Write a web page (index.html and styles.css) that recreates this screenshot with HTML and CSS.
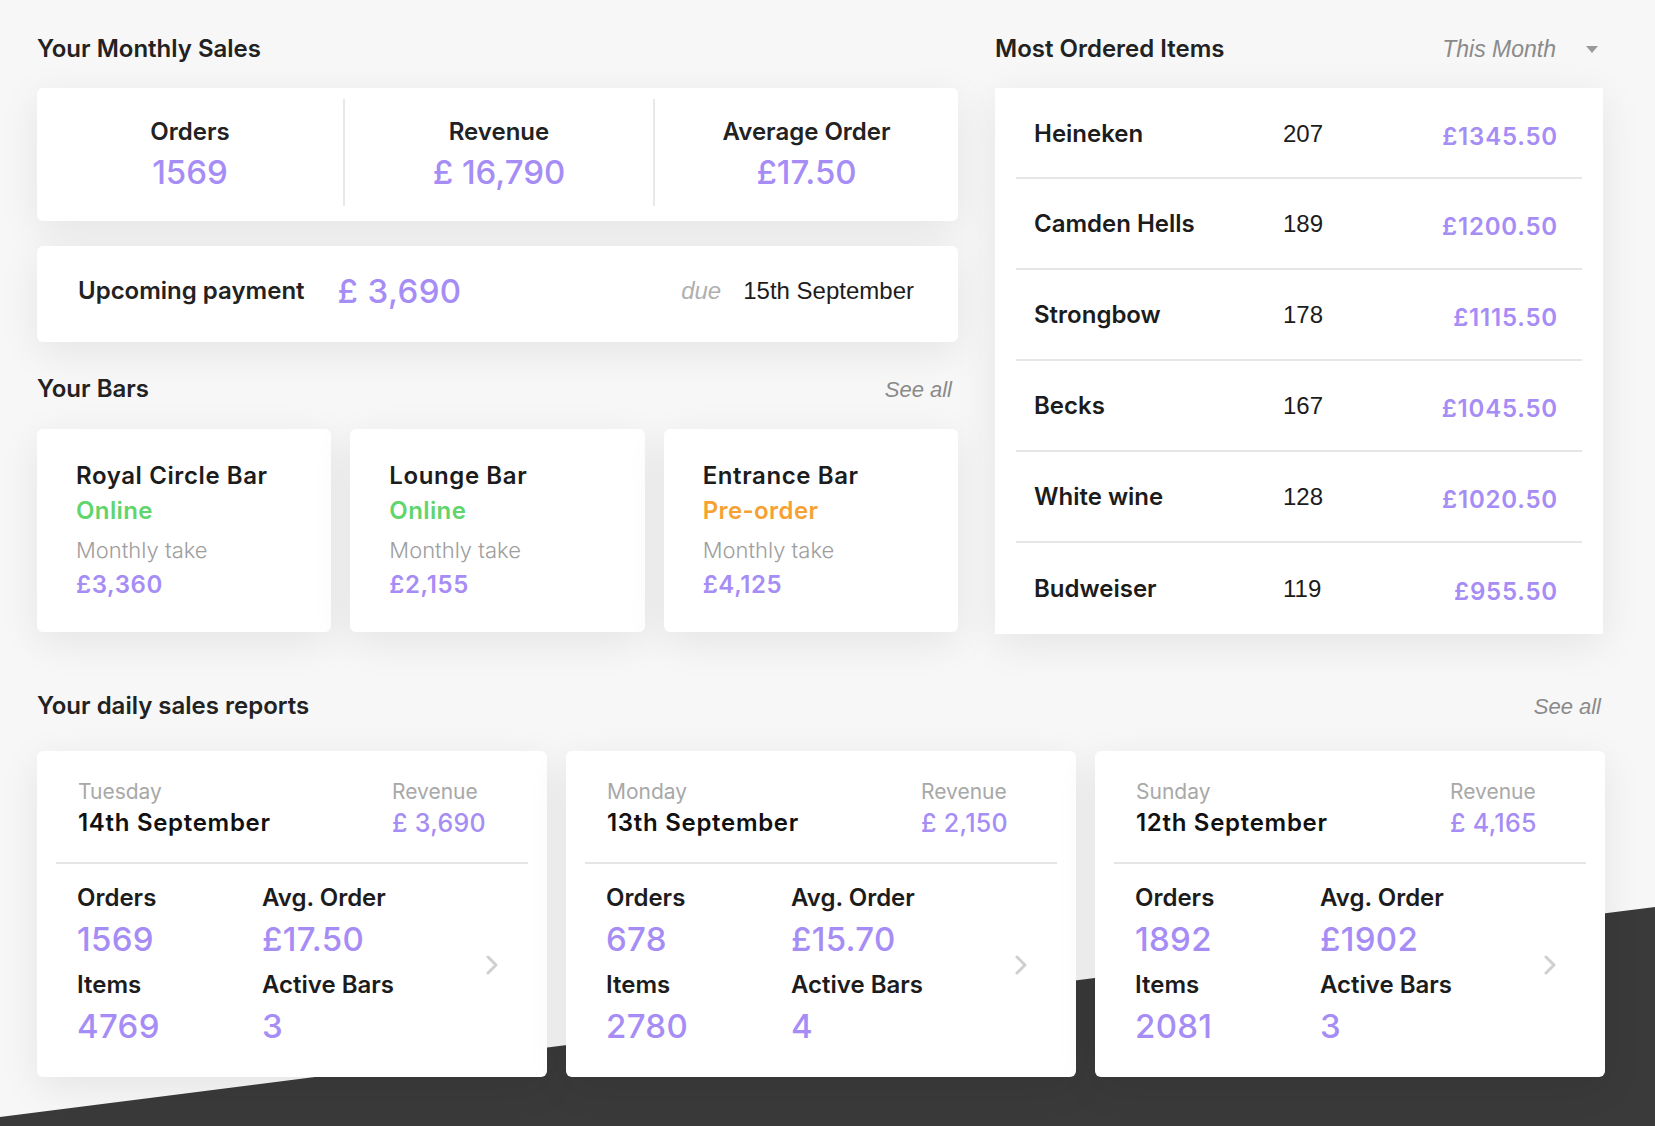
FILE: index.html
```html
<!DOCTYPE html>
<html lang="en">
<head>
<meta charset="utf-8">
<title>Sales dashboard</title>
<link rel="stylesheet" href="styles.css">
</head>
<body>
<div class="backdrop"></div>
<main class="page">
  <div class="top">
    <section class="left">
      <h2 class="heading">Your Monthly Sales</h2>
      <div class="card stats">
        <div class="stat"><div class="stat-label">Orders</div><div class="stat-value">1569</div></div>
        <div class="stat"><div class="stat-label">Revenue</div><div class="stat-value">£ 16,790</div></div>
        <div class="stat"><div class="stat-label">Average Order</div><div class="stat-value">£17.50</div></div>
      </div>
      <div class="card upcoming">
        <span class="up-label">Upcoming payment</span>
        <span class="up-value">£ 3,690</span>
        <span class="up-due">due</span>
        <span class="up-date">15th September</span>
      </div>
      <div class="section-head bars-head">
        <h2 class="heading">Your Bars</h2>
        <span class="see-all">See all</span>
      </div>
      <div class="bars">
        <div class="card bar">
          <div class="bar-name">Royal Circle Bar</div>
          <div class="bar-status online">Online</div>
          <div class="bar-label">Monthly take</div>
          <div class="bar-value">£3,360</div>
        </div>
        <div class="card bar">
          <div class="bar-name">Lounge Bar</div>
          <div class="bar-status online">Online</div>
          <div class="bar-label">Monthly take</div>
          <div class="bar-value">£2,155</div>
        </div>
        <div class="card bar">
          <div class="bar-name">Entrance Bar</div>
          <div class="bar-status preorder">Pre-order</div>
          <div class="bar-label">Monthly take</div>
          <div class="bar-value">£4,125</div>
        </div>
      </div>
    </section>
    <section class="right">
      <div class="section-head">
        <h2 class="heading">Most Ordered Items</h2>
        <div class="period"><span>This Month</span><span class="caret"></span></div>
      </div>
      <div class="items">
        <div class="item"><span class="item-name">Heineken</span><span class="item-qty">207</span><span class="item-price">£1345.50</span></div>
        <div class="item"><span class="item-name">Camden Hells</span><span class="item-qty">189</span><span class="item-price">£1200.50</span></div>
        <div class="item"><span class="item-name">Strongbow</span><span class="item-qty">178</span><span class="item-price">£1115.50</span></div>
        <div class="item"><span class="item-name">Becks</span><span class="item-qty">167</span><span class="item-price">£1045.50</span></div>
        <div class="item"><span class="item-name">White wine</span><span class="item-qty">128</span><span class="item-price">£1020.50</span></div>
        <div class="item"><span class="item-name">Budweiser</span><span class="item-qty">119</span><span class="item-price">£955.50</span></div>
      </div>
    </section>
  </div>

  <div class="section-head daily-head">
    <h2 class="heading daily-title">Your daily sales reports</h2>
    <span class="see-all">See all</span>
  </div>
  <div class="daily">
    <div class="card day">
      <div class="day-top">
        <div><div class="day-name">Tuesday</div><div class="day-date">14th September</div></div>
        <div><div class="day-name">Revenue</div><div class="day-rev">£ 3,690</div></div>
      </div>
      <div class="day-body">
        <div class="cell"><div class="cell-label">Orders</div><div class="cell-value">1569</div></div>
        <div class="cell"><div class="cell-label">Avg. Order</div><div class="cell-value">£17.50</div></div>
        <div class="chev"><svg width="12" height="20" viewBox="0 0 12 20"><path d="M2 2 L10 10 L2 18" fill="none" stroke="#cfcfcf" stroke-width="3" stroke-linecap="round" stroke-linejoin="round"/></svg></div>
        <div class="cell"><div class="cell-label">Items</div><div class="cell-value">4769</div></div>
        <div class="cell"><div class="cell-label">Active Bars</div><div class="cell-value">3</div></div>
      </div>
    </div>
    <div class="card day">
      <div class="day-top">
        <div><div class="day-name">Monday</div><div class="day-date">13th September</div></div>
        <div><div class="day-name">Revenue</div><div class="day-rev">£ 2,150</div></div>
      </div>
      <div class="day-body">
        <div class="cell"><div class="cell-label">Orders</div><div class="cell-value">678</div></div>
        <div class="cell"><div class="cell-label">Avg. Order</div><div class="cell-value">£15.70</div></div>
        <div class="chev"><svg width="12" height="20" viewBox="0 0 12 20"><path d="M2 2 L10 10 L2 18" fill="none" stroke="#cfcfcf" stroke-width="3" stroke-linecap="round" stroke-linejoin="round"/></svg></div>
        <div class="cell"><div class="cell-label">Items</div><div class="cell-value">2780</div></div>
        <div class="cell"><div class="cell-label">Active Bars</div><div class="cell-value">4</div></div>
      </div>
    </div>
    <div class="card day">
      <div class="day-top">
        <div><div class="day-name">Sunday</div><div class="day-date">12th September</div></div>
        <div><div class="day-name">Revenue</div><div class="day-rev">£ 4,165</div></div>
      </div>
      <div class="day-body">
        <div class="cell"><div class="cell-label">Orders</div><div class="cell-value">1892</div></div>
        <div class="cell"><div class="cell-label">Avg. Order</div><div class="cell-value">£1902</div></div>
        <div class="chev"><svg width="12" height="20" viewBox="0 0 12 20"><path d="M2 2 L10 10 L2 18" fill="none" stroke="#cfcfcf" stroke-width="3" stroke-linecap="round" stroke-linejoin="round"/></svg></div>
        <div class="cell"><div class="cell-label">Items</div><div class="cell-value">2081</div></div>
        <div class="cell"><div class="cell-label">Active Bars</div><div class="cell-value">3</div></div>
      </div>
    </div>
  </div>
</main>
</body>
</html>
```
FILE: styles.css
```css
* { box-sizing: border-box; }
html, body { margin: 0; padding: 0; }
body {
  position: relative;
  min-height: 1126px;
  overflow: hidden;
  background: #f7f7f7;
  font-family: "Inter", "Liberation Sans", sans-serif;
  color: #222;
}
.backdrop {
  position: absolute;
  inset: 0;
  background: #3a3a3a;
  clip-path: polygon(0 1117px, 100% 907px, 100% 100%, 0 100%);
  z-index: 0;
}
.page {
  position: relative;
  z-index: 1;
  padding: 34px 50px 0 37px;
  width: 1655px;
}
.heading {
  margin: 0;
  font-size: 24px;
  line-height: 30px;
  font-weight: 600;
  color: #222;
}
.card {
  background: #fff;
  border-radius: 6px;
  box-shadow: 0 10px 40px rgba(0, 0, 0, 0.08);
}
.top {
  display: grid;
  grid-template-columns: 921px 608px;
  column-gap: 37px;
  align-items: start;
}
.stats {
  margin-top: 24px;
  display: grid;
  grid-template-columns: 306px 310px 1fr;
  padding: 11px 0 15px;
}
.stat {
  text-align: center;
  padding: 18px 0 14px;
}
.stat + .stat { border-left: 2px solid #e8e8e8; }
.stat-label { font-size: 24px; line-height: 30px; font-weight: 600; }
.stat-value {
  margin-top: 5px;
  font-size: 33px;
  line-height: 40px;
  font-weight: 500;
  color: #a68df6;
}
.upcoming {
  margin-top: 25px;
  height: 96px;
  display: flex;
  align-items: center;
  padding: 0 44px 6px 41px;
}
.up-label { font-size: 24px; line-height: 30px; font-weight: 600; }
.up-value {
  margin-left: 33px;
  font-size: 33px;
  line-height: 40px;
  font-weight: 500;
  letter-spacing: 0.4px;
  color: #a68df6;
}
.up-due {
  margin-left: auto;
  font-family: "Liberation Sans", sans-serif;
  font-style: italic;
  font-size: 24px;
  line-height: 30px;
  color: #b0b0b0;
}
.up-date {
  margin-left: 22px;
  font-family: "Liberation Sans", sans-serif;
  font-size: 24px;
  line-height: 30px;
  color: #1c1c1c;
}
.section-head {
  display: flex;
  justify-content: space-between;
  align-items: baseline;
}
.bars-head { margin-top: 32px; padding-right: 6px; }
.see-all {
  font-family: "Liberation Sans", sans-serif;
  font-style: italic;
  font-size: 22px;
  color: #8a8a8a;
}
.bars {
  margin-top: 25px;
  display: grid;
  grid-template-columns: repeat(3, 1fr);
  column-gap: 19px;
}
.bar { padding: 30px 20px 31px 39px; }
.bar-name { font-size: 24px; line-height: 34px; font-weight: 600; letter-spacing: 0.6px; color: #1c1c1c; }
.bar-status { font-size: 24px; line-height: 36px; font-weight: 600; letter-spacing: 0.4px; }
.online { color: #5fd56b; }
.preorder { color: #f6a232; }
.bar-label {
  margin-top: 2px;
  font-size: 22px;
  line-height: 38px;
  font-weight: 300;
  color: #9e9e9e;
}
.bar-value {
  font-size: 24px;
  line-height: 32px;
  font-weight: 600;
  letter-spacing: 0.6px;
  color: #a68df6;
}
.period {
  display: flex;
  align-items: center;
  font-family: "Liberation Sans", sans-serif;
  font-style: italic;
  font-size: 23px;
  color: #8a8a8a;
  padding-right: 5px;
}
.caret {
  margin-left: 30px;
  width: 0;
  height: 0;
  border-left: 6px solid transparent;
  border-right: 6px solid transparent;
  border-top: 7px solid #9a9a9a;
}
.items {
  margin-top: 24px;
  background: #fff;
  box-shadow: 0 10px 40px rgba(0, 0, 0, 0.08);
  padding: 0 21px;
}
.item {
  height: 91px;
  display: grid;
  grid-template-columns: 249px 1fr auto;
  align-items: center;
  padding: 0 24px 0 18px;
  border-bottom: 2px solid #e6e6e6;
}
.item:first-child { padding-top: 2px; height: 91px; }
.item:last-child { border-bottom: none; }
.item-name { font-size: 24px; line-height: 30px; font-weight: 600; color: #1c1c1c; }
.item-qty {
  font-family: "Liberation Sans", sans-serif;
  font-size: 24px;
  line-height: 30px;
  color: #1c1c1c;
}
.item-price {
  padding-top: 6px;
  font-size: 24px;
  line-height: 30px;
  font-weight: 600;
  letter-spacing: 0.8px;
  color: #a68df6;
}
.daily-head { margin-top: 57px; padding-right: 4px; }
.daily-title { font-size: 24px; }
.daily {
  margin-top: 30px;
  display: grid;
  grid-template-columns: repeat(3, 1fr);
  column-gap: 19px;
  width: 1568px;
}
.day { padding: 0 19px; }
.day-top {
  display: grid;
  grid-template-columns: 314px auto;
  padding: 26px 0 23px 22px;
  border-bottom: 2px solid #e5e5e5;
}
.day-name { font-size: 21px; line-height: 30px; font-weight: 400; color: #a8a8a8; }
.day-date { font-size: 24px; line-height: 32px; font-weight: 600; letter-spacing: 0.7px; color: #111; }
.day-rev {
  font-size: 25px;
  line-height: 32px;
  font-weight: 500;
  letter-spacing: 0.3px;
  color: #a68df6;
}
.day-body {
  display: grid;
  grid-template-columns: 185px 185px 1fr;
  grid-template-rows: auto auto;
  row-gap: 11px;
  padding: 19px 30px 31px 21px;
}
.cell-label { font-size: 24px; line-height: 30px; font-weight: 600; color: #1c1c1c; }
.cell-value {
  margin-top: 6px;
  font-size: 33px;
  line-height: 40px;
  font-weight: 500;
  letter-spacing: 0.3px;
  color: #a68df6;
}
.chev {
  grid-column: 3;
  grid-row: 1 / span 2;
  display: flex;
  align-items: center;
  justify-content: flex-end;
}
```
